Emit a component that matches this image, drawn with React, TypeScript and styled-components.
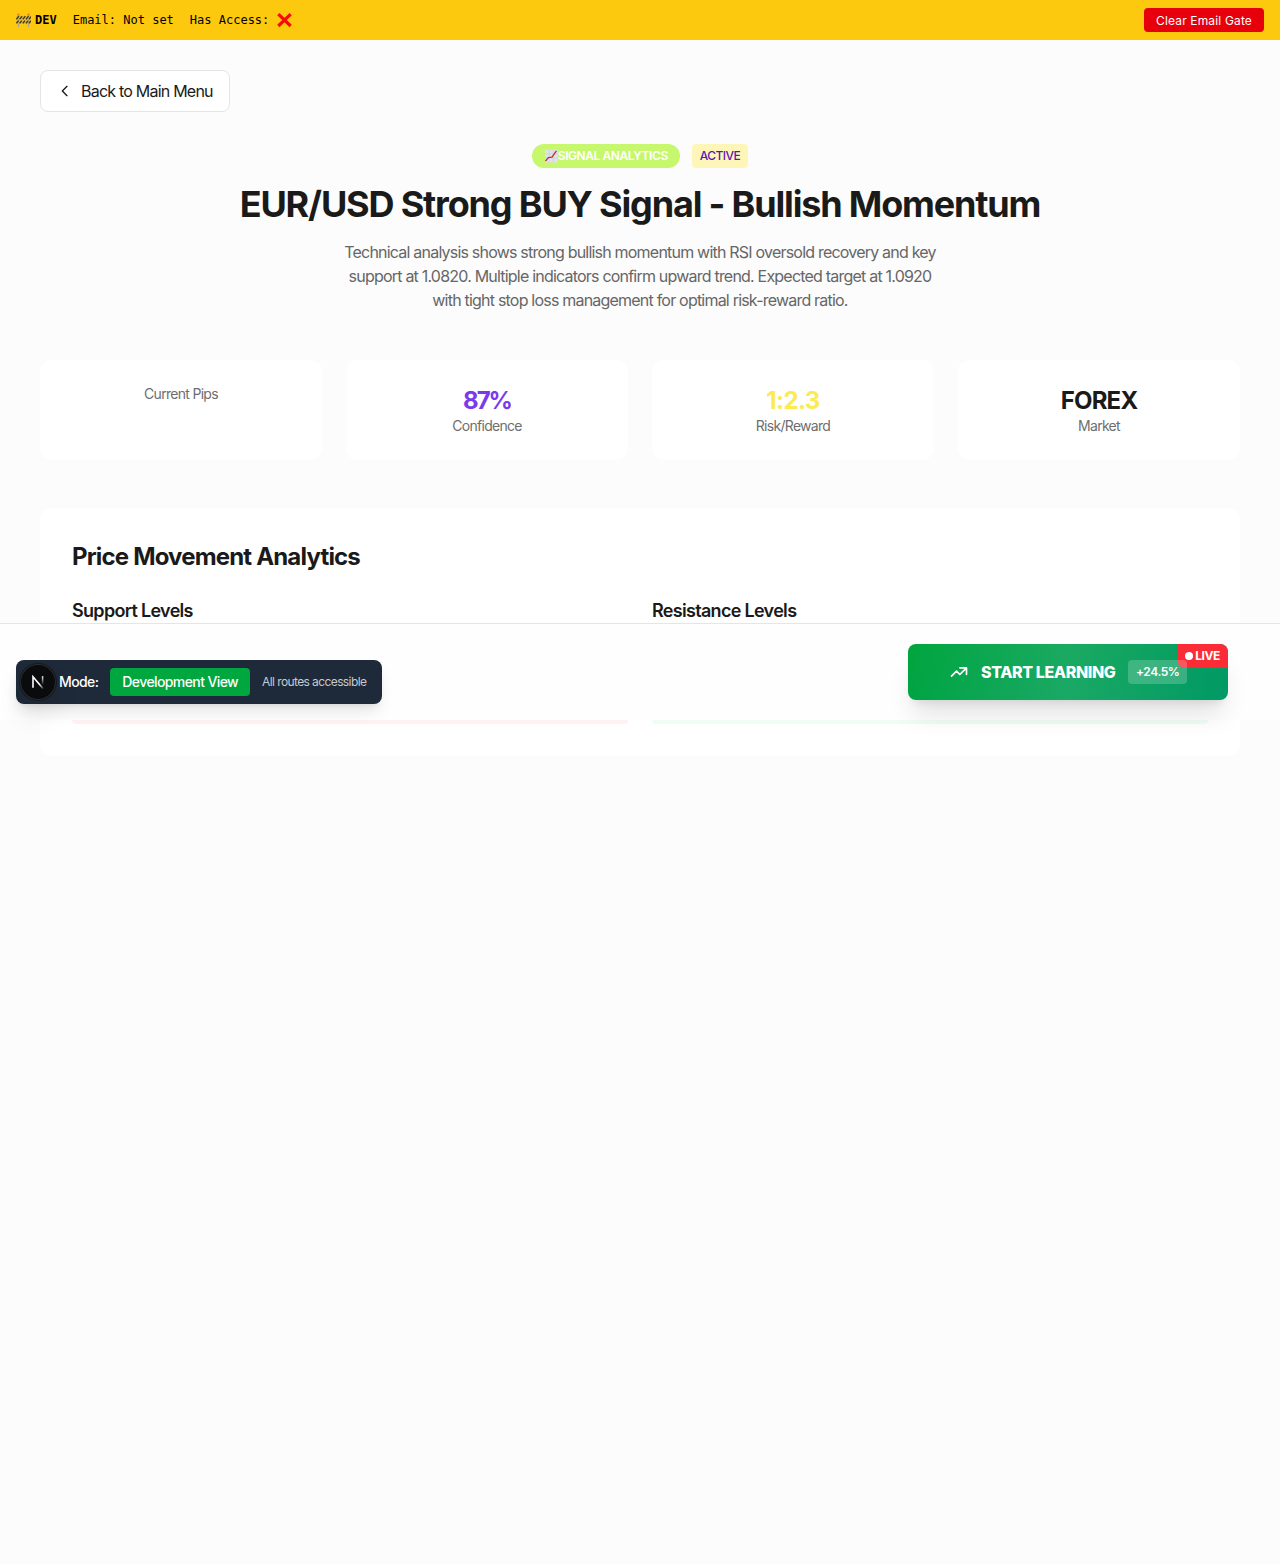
import React from "react";
import styled, { createGlobalStyle } from "styled-components";

const GlobalStyle = createGlobalStyle`
  *, *::before, *::after { box-sizing: border-box; }
  body {
    margin: 0;
    background: #fcfcfc;
    color: #1a1a1a;
    font-family: Inter, "Liberation Sans", sans-serif;
    font-size: 16px;
    line-height: 24px;
    letter-spacing: -0.4px;
  }
  h1, h2, h3, p { margin: 0; }
  button { font: inherit; letter-spacing: inherit; border: 0; padding: 0; cursor: pointer; }
`;

const Page = styled.div`
  position: relative;
  min-height: 1564px;
`;

const DevBar = styled.div`
  height: 40px;
  padding: 0 16px;
  display: flex;
  align-items: center;
  justify-content: space-between;
  background: #fdc90f;
  color: #000;
`;

const DevInfo = styled.div`
  display: flex;
  align-items: center;
  gap: 16px;
  font-family: "DejaVu Sans Mono", monospace;
  font-size: 12px;
  line-height: 16px;
  letter-spacing: 0;
`;

const DevTag = styled.span`
  font-weight: 700;
  display: flex;
  align-items: center;
  gap: 4px;
`;

const DevItem = styled.span`
  display: flex;
  align-items: center;
  gap: 8px;
`;

const ClearButton = styled.button`
  height: 24px;
  padding: 1px 12px 0;
  border-radius: 4px;
  background: #e7000b;
  color: #fff;
  font-size: 12px;
  line-height: 23px;
  font-weight: 400;
  letter-spacing: 0.15px;
`;

const Main = styled.main`
  padding: 30px 40px 0;
`;

const BackButton = styled.button`
  display: flex;
  align-items: center;
  gap: 8px;
  width: 190px;
  height: 42px;
  padding: 0 16px;
  background: #fff;
  border: 1px solid #e5e5e5;
  border-radius: 8px;
  color: #1a1a1a;
  letter-spacing: -0.78px;
  white-space: nowrap;
`;

const Header = styled.header`
  margin-top: 32px;
  display: flex;
  flex-direction: column;
  align-items: center;
  text-align: center;
`;

const Badges = styled.div`
  display: flex;
  gap: 12px;
  margin-bottom: 16px;
`;

const Badge = styled.span<{ $pill?: boolean }>`
  height: 24px;
  display: flex;
  align-items: center;
  padding: 0 ${(p) => (p.$pill ? 12 : 8)}px;
  border-radius: ${(p) => (p.$pill ? 12 : 4)}px;
  background: ${(p) => (p.$pill ? "#c6f76d" : "#fef6b9")};
  color: ${(p) => (p.$pill ? "#fff" : "#5b16b5")};
  font-size: 12px;
  font-weight: ${(p) => (p.$pill ? 600 : 500)};
  letter-spacing: ${(p) => (p.$pill ? -0.43 : -0.55)}px;
`;

const Title = styled.h1`
  font-size: 36px;
  line-height: 40px;
  font-weight: 700;
  letter-spacing: -1.17px;
  margin-bottom: 16px;
`;

const Summary = styled.p`
  width: 610px;
  color: #666;
  letter-spacing: -0.79px;
`;

const Stats = styled.section`
  margin-top: 48px;
  display: grid;
  grid-template-columns: repeat(4, 1fr);
  gap: 24px;
`;

const StatCard = styled.div`
  height: 100px;
  padding: 24px;
  border-radius: 12px;
  background: #fff;
  text-align: center;
`;

const StatValue = styled.div<{ $color: string; $tracking: number }>`
  padding-top: 1px;
  font-size: 24px;
  line-height: 31px;
  font-weight: 700;
  color: ${(p) => p.$color};
  letter-spacing: ${(p) => p.$tracking}px;
`;

const StatLabel = styled.div`
  font-size: 14px;
  line-height: 20px;
  letter-spacing: -0.7px;
  color: #6e6e6e;
`;

const Panel = styled.section`
  margin-top: 48px;
  padding: 33px 32px 32px;
  border-radius: 12px;
  background: #fff;
`;

const PanelTitle = styled.h2`
  font-size: 24px;
  line-height: 32px;
  font-weight: 700;
  letter-spacing: -0.83px;
  margin-bottom: 24px;
`;

const Columns = styled.div`
  display: grid;
  grid-template-columns: 1fr 1fr;
  gap: 24px;
`;

const LevelTitle = styled.h3`
  font-size: 18px;
  line-height: 28px;
  font-weight: 600;
  letter-spacing: -0.69px;
  margin-bottom: 11px;
`;

const LevelRows = styled.div`
  display: grid;
  gap: 8px;
`;

const LevelRow = styled.div<{ $tone: string }>`
  height: 40px;
  border-radius: 4px;
  background: ${(p) => p.$tone};
`;

const ActionBar = styled.div`
  position: absolute;
  top: 623px;
  left: 0;
  right: 0;
  height: 97px;
  padding: 20px 52px 0;
  display: flex;
  justify-content: flex-end;
  align-items: flex-start;
  border-top: 1px solid #e5e5e5;
  background: #fefefe;
`;

const StartButton = styled.button`
  position: relative;
  width: 320px;
  height: 56px;
  padding-left: 41px;
  display: flex;
  align-items: center;
  gap: 12px;
  border-radius: 8px;
  color: #fff;
  background:
    linear-gradient(90deg, transparent, rgba(255, 255, 255, 0.1), transparent),
    linear-gradient(135deg, #00a63e, #009966);
  box-shadow: 0 20px 25px -5px rgba(0, 0, 0, 0.1), 0 8px 10px -6px rgba(0, 0, 0, 0.1);
`;

const StartText = styled.span`
  width: 135px;
  font-weight: 800;
  letter-spacing: -0.4px;
  text-align: left;
  white-space: nowrap;
`;

const Gain = styled.span`
  position: relative;
  z-index: 1;
  height: 24px;
  padding: 0 8px;
  border-radius: 4px;
  background: rgba(255, 255, 255, 0.2);
  font-size: 12px;
  line-height: 24px;
  font-weight: 600;
  letter-spacing: -0.42px;
`;

const Live = styled.span`
  position: absolute;
  top: 0;
  right: 0;
  height: 24px;
  padding: 0 8px;
  display: flex;
  align-items: center;
  gap: 2px;
  border-radius: 0 8px 0 8px;
  background: #fb2c36;
  font-size: 12px;
  font-weight: 700;
`;

const LiveDot = styled.i`
  width: 8px;
  height: 8px;
  border-radius: 50%;
  background: #fff;
`;

const ModePanel = styled.aside`
  position: absolute;
  top: 660px;
  left: 16px;
  height: 44px;
  padding: 0 16px 0 4px;
  display: flex;
  align-items: center;
  border-radius: 8px;
  background: #1e2939;
  color: #fff;
  font-size: 14px;
  font-weight: 500;
  letter-spacing: -0.6px;
  white-space: nowrap;
  box-shadow: 0 10px 15px -3px rgba(0, 0, 0, 0.1), 0 4px 6px -4px rgba(0, 0, 0, 0.1);
`;

const LogoDisc = styled.div`
  width: 36px;
  height: 36px;
  margin-right: 3px;
  display: grid;
  place-items: center;
  border-radius: 50%;
  background: #0a0b0d;
  box-shadow: inset 0 0 0 1px #2b2d30, 0 0 0 1px #151a22, 0 16px 32px -8px rgba(0, 0, 0, 0.24);
`;

const ModeButton = styled.button`
  height: 28px;
  padding: 0 12px;
  margin: 0 12px;
  border-radius: 4px;
  background: #00a63e;
  color: #fff;
`;

const ModeNote = styled.span`
  font-size: 12px;
  font-weight: 400;
  letter-spacing: -0.6px;
  color: #c5cad2;
`;

const stats = [
  { label: "Current Pips" },
  { value: "87%", label: "Confidence", color: "#7c3aed", tracking: -2 },
  { value: "1:2.3", label: "Risk/Reward", color: "#fde950", tracking: -0.6 },
  { value: "FOREX", label: "Market", color: "#1a1a1a", tracking: -0.8 },
];

const levels = [
  { title: "Support Levels", tone: "#fef2f2" },
  { title: "Resistance Levels", tone: "#f0fdf4" },
];

function StrokeIcon({ size, d }: { size: number; d: string }) {
  return (
    <svg width={size} height={size} viewBox="0 0 24 24" fill="none" stroke="currentColor" strokeWidth="2" strokeLinecap="round" strokeLinejoin="round">
      <path d={d} />
    </svg>
  );
}

function BarrierIcon() {
  return (
    <svg width="15" height="14" viewBox="0 0 15 14" role="img" aria-label="Construction">
      <path d="M2.5 3v11M12.5 3v11" stroke="#b3a68a" strokeWidth="1.3" />
      <circle cx="2.5" cy="1.8" r="1.2" fill="#f57a22" />
      <circle cx="12.5" cy="1.8" r="1.2" fill="#f57a22" />
      <path d="M0 3.2h15v3.2H0zM0 7.6h15v2.8H0z" fill="#d9b53c" />
      <path d="M.4 6.4 2.9 3.2M3.6 6.4 6.1 3.2M6.8 6.4 9.3 3.2M10 6.4 12.5 3.2M12.9 6.4 15 3.6M.4 10.4 2.6 7.6M3.6 10.4 5.8 7.6M6.8 10.4 9 7.6M10 10.4 12.2 7.6M12.9 10.4 15 7.7" stroke="#3a3421" strokeWidth="1.3" />
    </svg>
  );
}

function CrossIcon() {
  return (
    <svg width="15" height="15" viewBox="0 0 15 15" role="img" aria-label="No">
      <path d="M1.3 1.2 13.7 13M13.7 1.2 1.3 13" stroke="#f90a0a" strokeWidth="3.2" />
    </svg>
  );
}

function ChartIcon() {
  return (
    <svg width="14" height="14" viewBox="0 0 14 14" role="img" aria-label="Chart">
      <rect x="1" y="0.5" width="12.5" height="13" fill="#dde3e6" />
      <path d="M1 4.8h12.5M1 9h12.5M5 .5v13M9.3.5v13" stroke="#c3cfda" strokeWidth="0.6" />
      <path d="M1.5 12.2 4.3 8.6 8 8.2 12.4 1.8" fill="none" stroke="#cf2433" strokeWidth="1.3" strokeLinejoin="round" />
    </svg>
  );
}

function NextLogo() {
  return (
    <svg width="14" height="14" viewBox="0 0 14 14" fill="none">
      <defs>
        <linearGradient id="diagonal" x1="3" y1="2" x2="12" y2="14" gradientUnits="userSpaceOnUse">
          <stop offset="0.6" stopColor="#fff" />
          <stop offset="1" stopColor="#fff" stopOpacity="0.1" />
        </linearGradient>
        <linearGradient id="stem" x1="0" y1="1" x2="0" y2="10" gradientUnits="userSpaceOnUse">
          <stop stopColor="#fff" />
          <stop offset="1" stopColor="#fff" stopOpacity="0" />
        </linearGradient>
      </defs>
      <path d="M2 12.8V1.8L12.2 13.8" stroke="url(#diagonal)" strokeWidth="1.6" />
      <path d="M11.6 1.2V10" stroke="url(#stem)" strokeWidth="1.5" />
    </svg>
  );
}

export default function App() {
  return (
    <Page>
      <GlobalStyle />
      <DevBar>
        <DevInfo>
          <DevTag><BarrierIcon />DEV</DevTag>
          <DevItem>Email: Not set</DevItem>
          <DevItem>Has Access: <CrossIcon /></DevItem>
        </DevInfo>
        <ClearButton>Clear Email Gate</ClearButton>
      </DevBar>
      <Main>
        <BackButton><StrokeIcon size={16} d="M15 19l-7-7 7-7" />Back to Main Menu</BackButton>
        <Header>
          <Badges>
            <Badge $pill><ChartIcon />SIGNAL ANALYTICS</Badge>
            <Badge>ACTIVE</Badge>
          </Badges>
          <Title>EUR/USD Strong BUY Signal - Bullish Momentum</Title>
          <Summary>
            Technical analysis shows strong bullish momentum with RSI oversold recovery and key
            support at 1.0820. Multiple indicators confirm upward trend. Expected target at 1.0920
            with tight stop loss management for optimal risk-reward ratio.
          </Summary>
        </Header>
        <Stats>
          {stats.map((s) => (
            <StatCard key={s.label}>
              {s.value && <StatValue $color={s.color!} $tracking={s.tracking!}>{s.value}</StatValue>}
              <StatLabel>{s.label}</StatLabel>
            </StatCard>
          ))}
        </Stats>
        <Panel>
          <PanelTitle>Price Movement Analytics</PanelTitle>
          <Columns>
            {levels.map((l) => (
              <div key={l.title}>
                <LevelTitle>{l.title}</LevelTitle>
                <LevelRows>
                  <LevelRow $tone={l.tone} />
                  <LevelRow $tone={l.tone} />
                </LevelRows>
              </div>
            ))}
          </Columns>
        </Panel>
      </Main>
      <ActionBar>
        <StartButton>
          <StrokeIcon size={20} d="M13 7h8m0 0v8m0-8l-8 8-4-4-6 6" />
          <StartText>START LEARNING</StartText>
          <Gain>+24.5%</Gain>
          <Live><LiveDot />LIVE</Live>
        </StartButton>
      </ActionBar>
      <ModePanel>
        <LogoDisc><NextLogo /></LogoDisc>
        <span>Mode:</span>
        <ModeButton>Development View</ModeButton>
        <ModeNote>All routes accessible</ModeNote>
      </ModePanel>
    </Page>
  );
}
